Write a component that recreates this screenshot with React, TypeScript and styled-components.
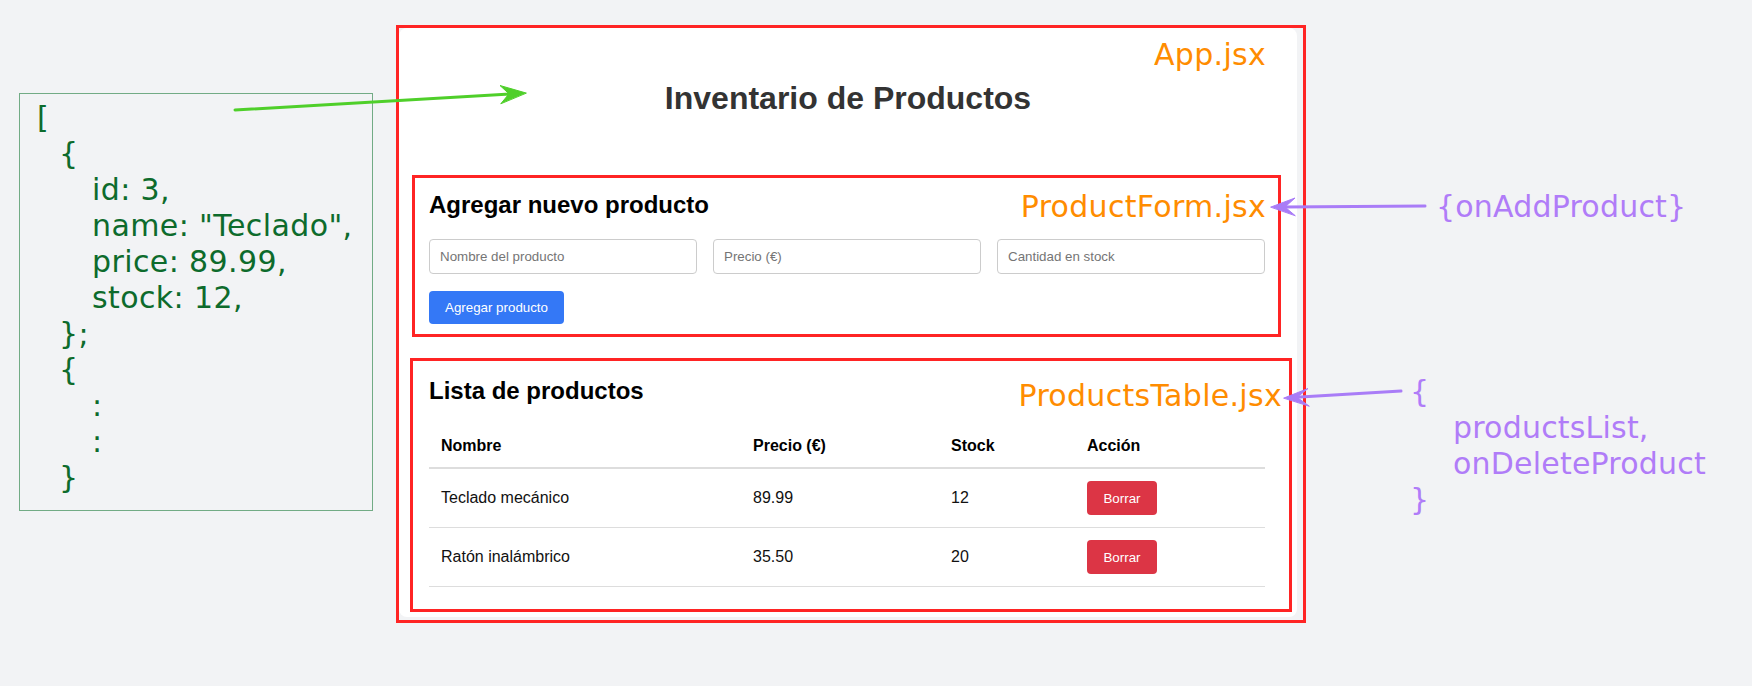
import React from "react";
import styled, { createGlobalStyle } from "styled-components";

const GlobalStyle = createGlobalStyle`
  html, body { margin: 0; padding: 0; background: #f2f3f5; }
  body { font-family: "Liberation Sans", Arial, sans-serif; }
  * { box-sizing: border-box; }
`;

const Page = styled.div`
  position: relative;
  width: 1752px;
  height: 686px;
  display: flex;
  align-items: flex-start;
  background: #f2f3f5;
  overflow: hidden;
`;

const JsonBox = styled.pre`
  width: 354px;
  height: 418px;
  margin: 93px 0 0 19px;
  border: 1px solid #72ab85;
  padding: 6px 0 0 17px;
  font-family: "DejaVu Sans", Verdana, sans-serif;
  font-size: 30px;
  line-height: 36px;
  letter-spacing: 0.4px;
  color: #0d6b2c;
`;

const CodeLine = styled.div<{ $indent: number }>`
  padding-left: ${(p) => p.$indent}px;
  white-space: pre;
`;

const AppFrame = styled.div`
  width: 910px;
  height: 598px;
  margin: 25px 0 0 23px;
  border: 3px solid #ff2424;
`;

const Card = styled.main`
  position: relative;
  width: 898px;
  height: 589px;
  background: #ffffff;
  border-radius: 8px;
  padding-top: 52px;
`;

const Title = styled.h1`
  margin: 0;
  font-size: 32px;
  font-weight: 700;
  line-height: normal;
  color: #333333;
  text-align: center;
`;

const Section = styled.section<{ $mt: number; $ml: number; $mr: number; $pad: string }>`
  position: relative;
  margin: ${(p) => p.$mt}px ${(p) => p.$mr}px 0 ${(p) => p.$ml}px;
  padding: ${(p) => p.$pad};
  border: 3px solid #ff2424;
`;

const SectionTitle = styled.h2`
  margin: 0;
  font-size: 24px;
  font-weight: 700;
  line-height: normal;
  color: #000000;
`;

const InputsRow = styled.div`
  display: grid;
  grid-template-columns: repeat(3, 1fr);
  gap: 16px;
  margin-top: 20px;
`;

const TextInput = styled.input`
  height: 35px;
  width: 100%;
  border: 1px solid #cccccc;
  border-radius: 4px;
  padding: 0 10px;
  font-family: "Liberation Sans", Arial, sans-serif;
  font-size: 13.333px;
  color: #222;
  background: #fff;
  &::placeholder { color: #757575; }
`;

const AddButton = styled.button`
  display: block;
  margin-top: 17px;
  height: 33px;
  padding: 0 16px;
  background: #3478f6;
  color: #ffffff;
  border: none;
  border-radius: 4px;
  font-family: "Liberation Sans", Arial, sans-serif;
  font-size: 13.333px;
`;

const Table = styled.table`
  width: 100%;
  margin-top: 19px;
  border-collapse: collapse;
  table-layout: fixed;
`;

const Th = styled.th`
  text-align: left;
  padding: 13px 12px 12px;
  line-height: 18px;
  font-size: 16px;
  font-weight: 700;
  color: #000;
  border-bottom: 2px solid #dddddd;
`;

const Td = styled.td`
  padding: 12px;
  font-size: 16px;
  color: #111;
  vertical-align: middle;
  border-bottom: 1px solid #dddddd;
`;

const DeleteButton = styled.button`
  display: block;
  width: 70px;
  height: 34px;
  padding: 0;
  background: #dc3545;
  color: #ffffff;
  border: none;
  border-radius: 4px;
  font-family: "Liberation Sans", Arial, sans-serif;
  font-size: 13.333px;
`;

const FileLabel = styled.span<{ $top: number; $right: number }>`
  position: absolute;
  top: ${(p) => p.$top}px;
  right: ${(p) => p.$right}px;
  font-family: "DejaVu Sans", Verdana, sans-serif;
  font-size: 30px;
  line-height: 36px;
  letter-spacing: 0.3px;
  color: #ff8c00;
  white-space: nowrap;
`;

const PropsColumn = styled.div`
  margin: 188.6px 0 0 104px;
  font-family: "DejaVu Sans", Verdana, sans-serif;
  font-size: 30px;
  line-height: 36px;
  letter-spacing: 0.2px;
  color: #b07cf8;
`;

const PropsBlock = styled.div<{ $mt: number }>`
  margin-top: ${(p) => p.$mt}px;
`;

const ArrowLayer = styled.svg`
  position: absolute;
  left: 0;
  top: 0;
  pointer-events: none;
`;

type Product = { id: number; name: string; price: string; stock: number };

const products: Product[] = [
  { id: 1, name: "Teclado mecánico", price: "89.99", stock: 12 },
  { id: 2, name: "Ratón inalámbrico", price: "35.50", stock: 20 },
];

const jsonLines: [number, string][] = [
  [0, "["],
  [22, "{"],
  [55, "id: 3,"],
  [55, 'name: "Teclado",'],
  [55, "price: 89.99,"],
  [55, "stock: 12,"],
  [22, "};"],
  [22, "{"],
  [55, ":"],
  [55, ":"],
  [22, "}"],
];

export default function App() {
  return (
    <>
      <GlobalStyle />
      <Page>
        <JsonBox>
          {jsonLines.map(([indent, text], i) => (
            <CodeLine key={i} $indent={indent}>
              {text}
            </CodeLine>
          ))}
        </JsonBox>

        <AppFrame>
          <Card>
            <FileLabel $top={8.6} $right={31}>App.jsx</FileLabel>
            <Title>Inventario de Productos</Title>

            <Section $mt={58} $ml={13} $mr={16} $pad="13px 13px 10px 14px">
              <FileLabel $top={10.6} $right={12}>ProductForm.jsx</FileLabel>
              <SectionTitle>Agregar nuevo producto</SectionTitle>
              <InputsRow>
                <TextInput placeholder="Nombre del producto" />
                <TextInput placeholder="Precio (€)" />
                <TextInput placeholder="Cantidad en stock" />
              </InputsRow>
              <AddButton>Agregar producto</AddButton>
            </Section>

            <Section $mt={21} $ml={11} $mr={5} $pad="16px 24px 22px 16px">
              <FileLabel $top={16.6} $right={7}>ProductsTable.jsx</FileLabel>
              <SectionTitle>Lista de productos</SectionTitle>
              <Table>
                <colgroup>
                  <col style={{ width: 312 }} />
                  <col style={{ width: 198 }} />
                  <col style={{ width: 136 }} />
                  <col style={{ width: 190 }} />
                </colgroup>
                <thead>
                  <tr>
                    <Th>Nombre</Th>
                    <Th>Precio (€)</Th>
                    <Th>Stock</Th>
                    <Th>Acción</Th>
                  </tr>
                </thead>
                <tbody>
                  {products.map((p) => (
                    <tr key={p.id}>
                      <Td>{p.name}</Td>
                      <Td>{p.price}</Td>
                      <Td>{p.stock}</Td>
                      <Td>
                        <DeleteButton>Borrar</DeleteButton>
                      </Td>
                    </tr>
                  ))}
                </tbody>
              </Table>
            </Section>
          </Card>
        </AppFrame>

        <PropsColumn>
          <PropsBlock $mt={0}>
            <CodeLine $indent={26}>{"{onAddProduct}"}</CodeLine>
          </PropsBlock>
          <PropsBlock $mt={149}>
            <CodeLine $indent={0}>{"{"}</CodeLine>
            <CodeLine $indent={43}>productsList,</CodeLine>
            <CodeLine $indent={43}>onDeleteProduct</CodeLine>
            <CodeLine $indent={0}>{"}"}</CodeLine>
          </PropsBlock>
        </PropsColumn>

        <ArrowLayer width="1752" height="686" viewBox="0 0 1752 686">
          <g stroke="#4fcf2a" strokeWidth="3" fill="#4fcf2a" strokeLinecap="round">
            <line x1="235" y1="110" x2="512" y2="93.8" />
            <polygon points="526,93 500,85.5 509,93.8 501,103.5" strokeWidth="1" strokeLinejoin="round" />
          </g>
          <g stroke="#a97cf7" strokeWidth="3" fill="#a97cf7" strokeLinecap="round">
            <line x1="1425" y1="206" x2="1284" y2="207" />
            <polygon points="1271,207 1295,198 1285,207 1295,215.5" strokeWidth="1" strokeLinejoin="round" />
            <line x1="1401" y1="391" x2="1296" y2="397.3" />
            <polygon points="1284,398 1308,388.5 1297,397.3 1309,406" strokeWidth="1" strokeLinejoin="round" />
          </g>
        </ArrowLayer>
      </Page>
    </>
  );
}
